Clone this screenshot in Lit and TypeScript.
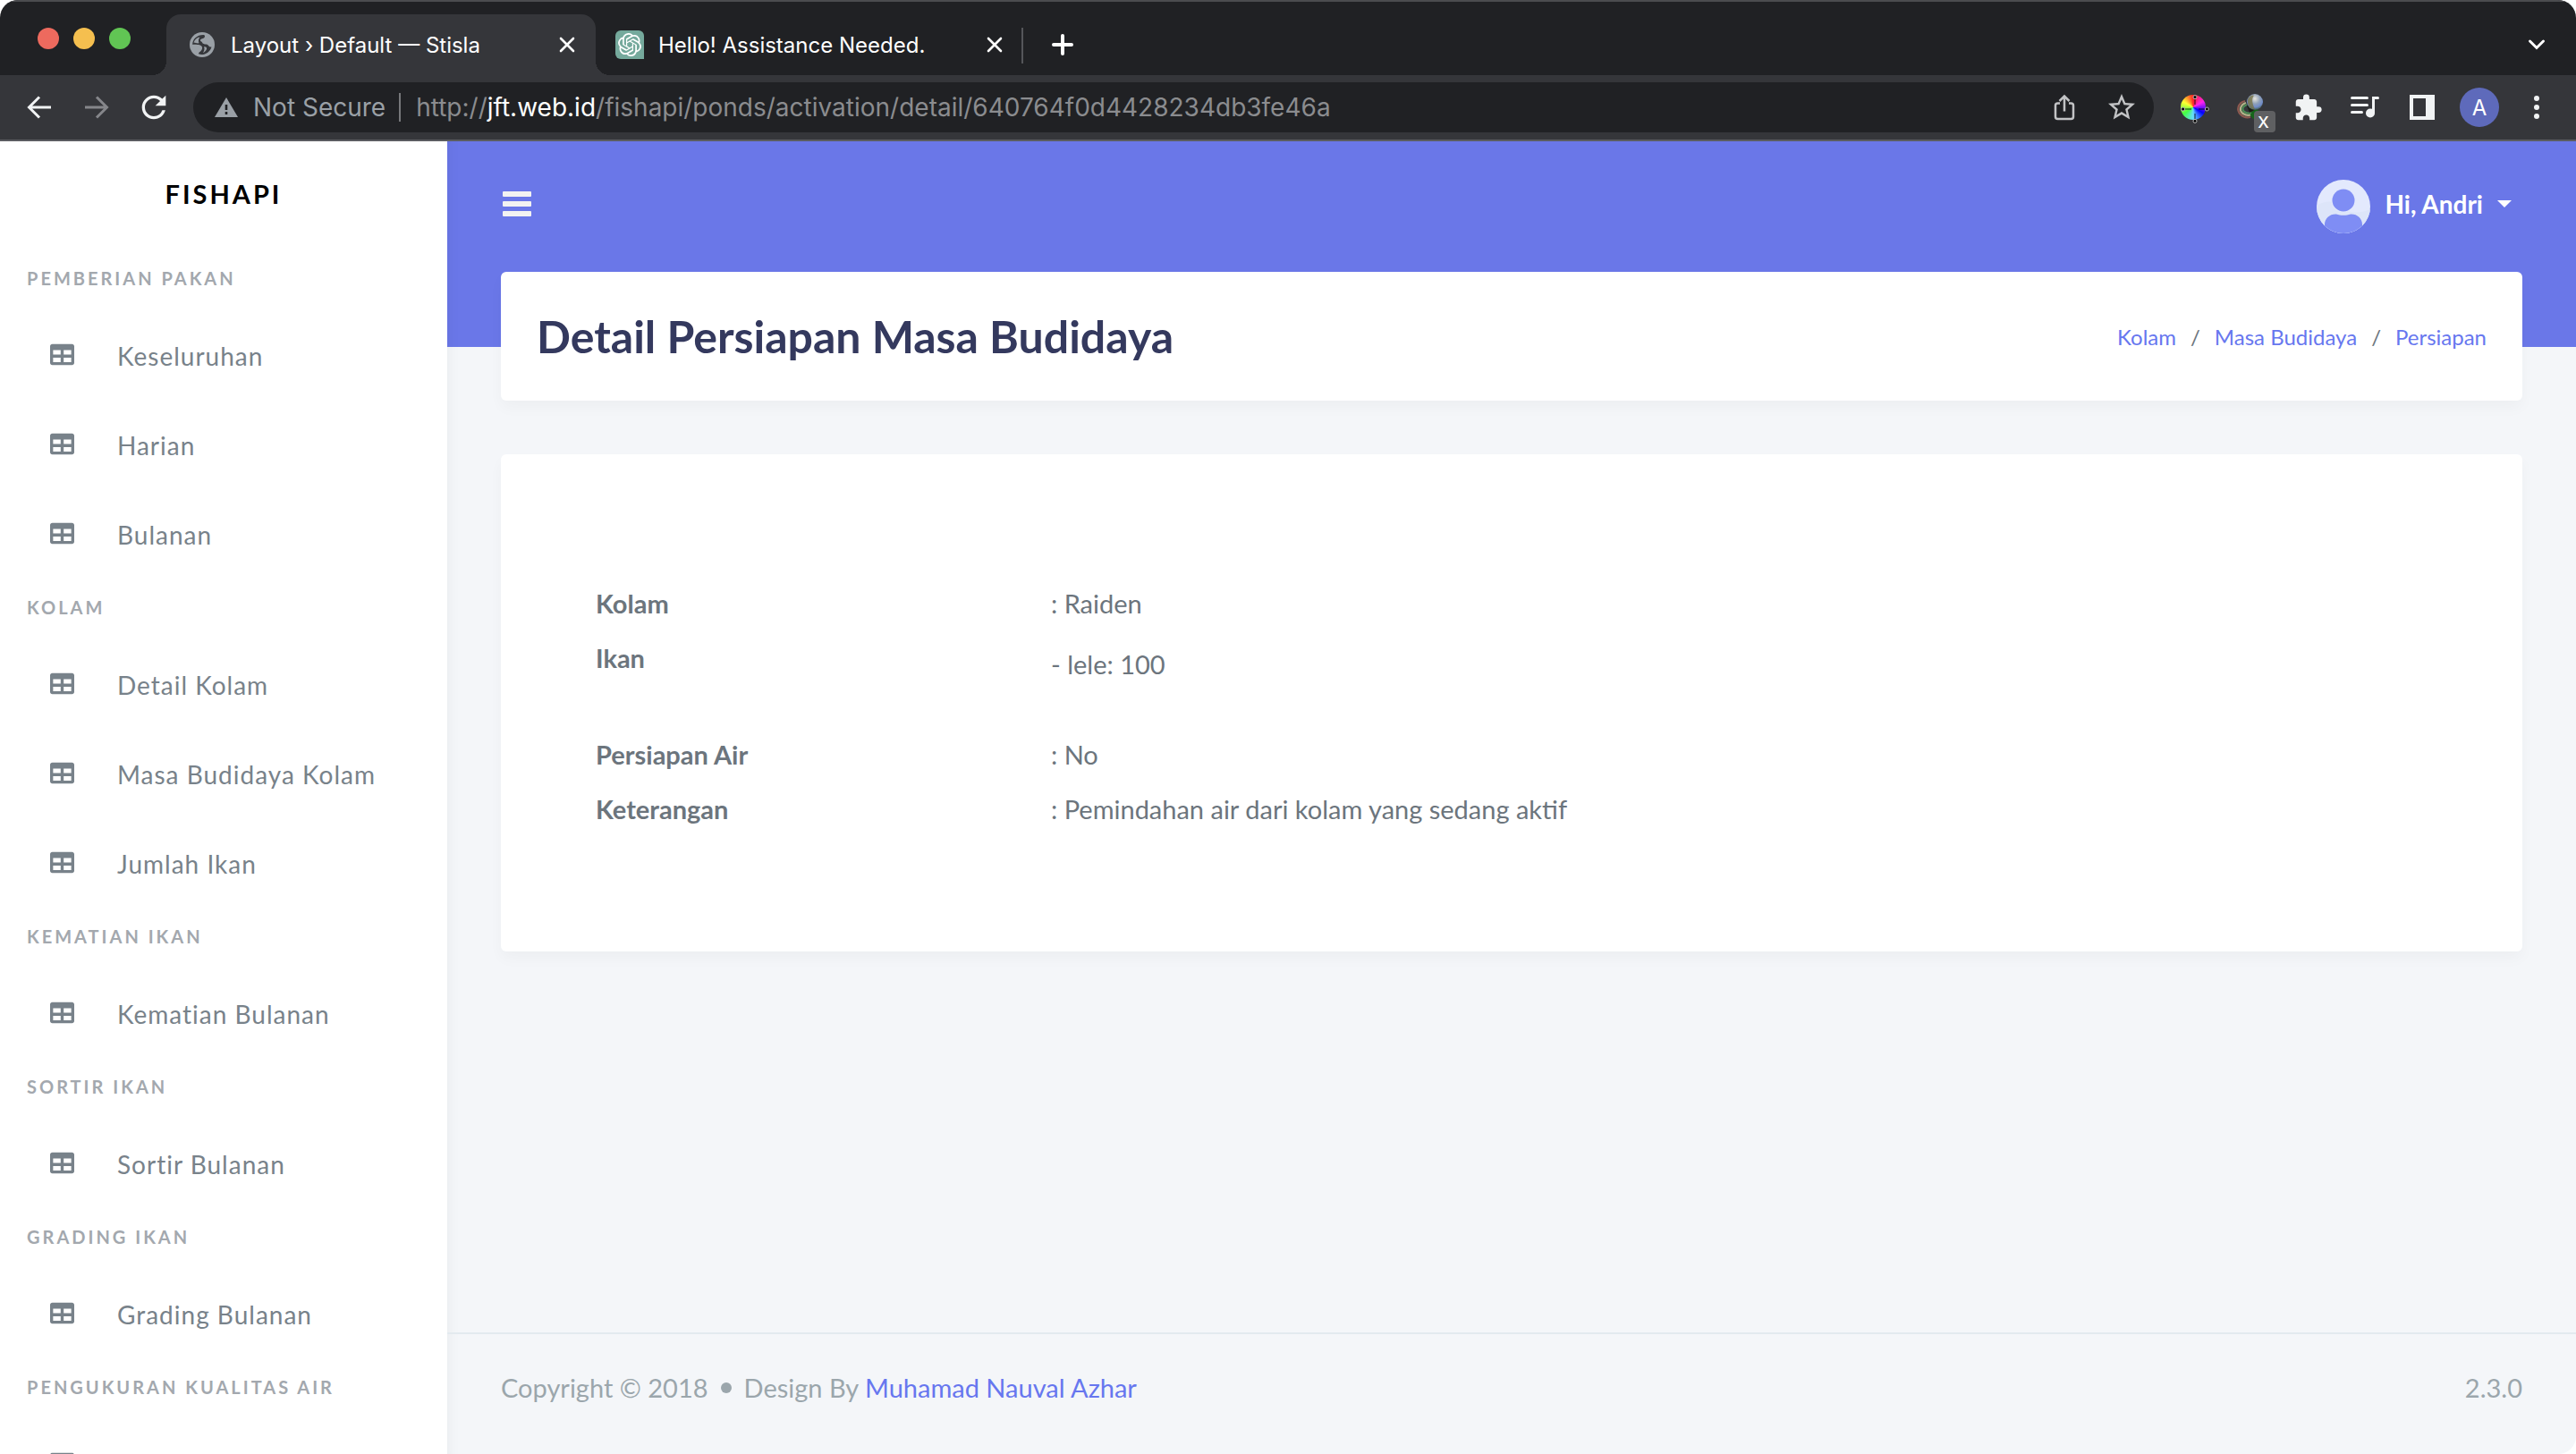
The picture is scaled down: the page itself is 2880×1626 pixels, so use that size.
import { LitElement, html, css, svg } from "lit";
import { customElement } from "lit/decorators.js";

const tableIcon = html`<svg class="table-icon" viewBox="0 0 512 512" aria-hidden="true">
  <path d="M464 32H48C21.49 32 0 53.49 0 80v352c0 26.51 21.49 48 48 48h416c26.51 0 48-21.49 48-48V80c0-26.51-21.49-48-48-48zM224 416H64v-96h160v96zm0-160H64v-96h160v96zm224 160H288v-96h160v96zm0-160H288v-96h160v96z" />
</svg>`;

const closeIcon = svg`<svg width="18" height="18" viewBox="0 0 18 18" fill="none" stroke="#fff" stroke-width="2.600" stroke-linecap="round"><path d="M2 2l14 14M16 2L2 16"/></svg>`;

@customElement("browser-tabs")
export class BrowserTabs extends LitElement {
  static styles = css`
    :host {
      display: flex;
      align-items: flex-end;
      box-sizing: border-box;
      height: 84px;
      padding: 0 12px 0 42px;
      background: #202124;
      border-top: 2px solid #4b4c4f;
      font-family: Inter, "Liberation Sans", sans-serif;
      font-size: 24px;
      color: #fff;
    }
    button {
      display: grid;
      place-items: center;
      padding: 0;
      border: 0;
      background: none;
      color: inherit;
    }
    .lights {
      display: flex;
      gap: 16px;
      margin-bottom: 29px;
      margin-right: 40px;
    }
    .light {
      width: 24px;
      height: 24px;
      border-radius: 50%;
    }
    .red { background: #ed6a5e; }
    .amber { background: #f5bf4f; }
    .green { background: #61c554; }
    .tab {
      position: relative;
      display: flex;
      align-items: center;
      box-sizing: border-box;
      width: 480px;
      height: 68px;
      padding: 0 23px 0 26px;
      gap: 18px;
    }
    .tab .title {
      flex: 1;
      white-space: nowrap;
    }
    .active {
      background: #35363a;
      border-radius: 16px 16px 0 0;
    }
    .active::before,
    .active::after {
      content: "";
      position: absolute;
      bottom: 0;
      width: 16px;
      height: 16px;
    }
    .active::before {
      left: -16px;
      background: radial-gradient(circle at 0 0, transparent 16px, #35363a 16px);
    }
    .active::after {
      right: -16px;
      background: radial-gradient(circle at 100% 0, transparent 16px, #35363a 16px);
    }
    .idle {
      width: 476px;
      gap: 16px;
      padding: 0 21px 0 22px;
    }
    .favicon {
      display: grid;
      place-items: center;
      width: 32px;
      height: 32px;
      border-radius: 6px 6px 0 6px;
      background: #75a99c;
    }
    .divider {
      width: 2px;
      height: 40px;
      margin-bottom: 13px;
      background: #55565a;
    }
    .plus {
      width: 88px;
      height: 68px;
    }
    .search {
      width: 64px;
      height: 68px;
      margin-left: auto;
    }
  `;

  render() {
    return html`
      <div class="lights">
        <button class="light red" aria-label="Close window"></button>
        <button class="light amber" aria-label="Minimise window"></button>
        <button class="light green" aria-label="Zoom window"></button>
      </div>
      <div class="tab active">
        <svg width="28" height="28" viewBox="0 0 28 28" aria-hidden="true">
          <circle cx="14" cy="14" r="14" fill="#9aa0a6" />
          <path fill="#35363a" d="M15.500 3C17 3.200 17.500 4.500 16.500 6C15.500 7.500 12.500 7 12 8.500C11.500 10.500 13.500 10 14 11.500C14.500 13 16.500 13.500 18.500 13.500C21.500 13.500 20.500 16.800 24.500 16.500C23 21 19.500 24.500 14.500 25C12.500 25 11 24.800 10 24.300C9.800 22.500 12 22 13 20.500C14.500 18.500 14.500 16.500 13 15.200C11 13.600 7 14.500 3.200 13.800C3.200 8 8 3 15.500 3z" />
          <path fill="#9aa0a6" d="M4.500 11.500C6 7.500 8.500 6 11.500 5.500C9.800 7.500 9.500 10 10.500 12.300C8.500 12.600 6.500 12 4.500 11.500zM16 16.500C18 16 19.500 17 19 19C18 21 16.500 22.500 15 23C16.500 20.500 17 18.500 16 16.500z" />
        </svg>
        <span class="title">Layout › Default — Stisla</span>
        <button aria-label="Close tab">${closeIcon}</button>
      </div>
      <div class="tab idle">
        <span class="favicon">
          <svg width="26" height="26" viewBox="0 0 24 24" fill="#fff" aria-hidden="true">
            <path d="M22.2819 9.8211a5.9847 5.9847 0 0 0-.5157-4.9108 6.0462 6.0462 0 0 0-6.5098-2.9A6.0651 6.0651 0 0 0 4.9807 4.1818a5.9847 5.9847 0 0 0-3.9977 2.9 6.0462 6.0462 0 0 0 .7427 7.0966 5.98 5.98 0 0 0 .511 4.9107 6.051 6.051 0 0 0 6.5146 2.9001A5.9847 5.9847 0 0 0 13.2599 24a6.0557 6.0557 0 0 0 5.7718-4.2058 5.9894 5.9894 0 0 0 3.9977-2.9001 6.0557 6.0557 0 0 0-.7475-7.0729zm-9.022 12.6081a4.4755 4.4755 0 0 1-2.8764-1.0408l.1419-.0804 4.7783-2.7582a.7948.7948 0 0 0 .3927-.6813v-6.7369l2.02 1.1686a.071.071 0 0 1 .038.052v5.5826a4.504 4.504 0 0 1-4.4945 4.4944zm-9.6607-4.1254a4.4708 4.4708 0 0 1-.5346-3.0137l.142.0852 4.783 2.7582a.7712.7712 0 0 0 .7806 0l5.8428-3.3685v2.3324a.0804.0804 0 0 1-.0332.0615L9.74 19.9502a4.4992 4.4992 0 0 1-6.1408-1.6464zM2.3408 7.8956a4.485 4.485 0 0 1 2.3655-1.9728V11.6a.7664.7664 0 0 0 .3879.6765l5.8144 3.3543-2.0201 1.1685a.0757.0757 0 0 1-.071 0l-4.8303-2.7865A4.504 4.504 0 0 1 2.3408 7.872zm16.5963 3.8558L13.1038 8.364 15.1192 7.2a.0757.0757 0 0 1 .071 0l4.8303 2.7913a4.4944 4.4944 0 0 1-.6765 8.1042v-5.6772a.79.79 0 0 0-.407-.667zm2.0107-3.0231l-.142-.0852-4.7735-2.7818a.7759.7759 0 0 0-.7854 0L9.409 9.2297V6.8974a.0662.0662 0 0 1 .0284-.0615l4.8303-2.7866a4.4992 4.4992 0 0 1 6.6802 4.66zM8.3065 12.863l-2.02-1.1638a.0804.0804 0 0 1-.038-.0567V6.0742a4.4992 4.4992 0 0 1 7.3757-3.4537l-.142.0805L8.704 5.459a.7948.7948 0 0 0-.3927.6813zm1.0976-2.3654l2.602-1.4998 2.6069 1.4998v2.9994l-2.5974 1.4997-2.6067-1.4997Z" />
          </svg>
        </span>
        <span class="title">Hello! Assistance Needed.</span>
        <button aria-label="Close tab">${closeIcon}</button>
      </div>
      <span class="divider"></span>
      <button class="plus" aria-label="New tab">
        <svg width="24" height="24" viewBox="0 0 24 24" fill="none" stroke="#fff" stroke-width="4" stroke-linecap="round"><path d="M12 2v20M2 12h20" /></svg>
      </button>
      <button class="search" aria-label="Search tabs">
        <svg width="20" height="14" viewBox="0 0 20 14" fill="none" stroke="#fff" stroke-width="3" stroke-linecap="round"><path d="M2.500 3L10 10.500 17.500 3" /></svg>
      </button>
    `;
  }
}

@customElement("browser-toolbar")
export class BrowserToolbar extends LitElement {
  static styles = css`
    :host {
      display: flex;
      align-items: center;
      box-sizing: border-box;
      height: 74px;
      padding: 0 12px;
      background: #35363a;
      border-bottom: 2px solid #5b5c60;
      font-family: Inter, "Liberation Sans", sans-serif;
      font-size: 28px;
    }
    button {
      display: grid;
      place-items: center;
      width: 64px;
      height: 56px;
      padding: 0;
      border: 0;
      background: none;
      font: inherit;
    }
    .omnibox {
      display: flex;
      align-items: center;
      flex: 1;
      min-width: 0;
      height: 56px;
      margin: 0 12px;
      padding: 0 4px 0 24px;
      box-sizing: border-box;
      border-radius: 28px;
      background: #202124;
      white-space: nowrap;
    }
    .security {
      display: flex;
      align-items: center;
      gap: 17px;
      width: auto;
      color: #9aa0a6;
    }
    .bar {
      width: 2px;
      height: 32px;
      margin: 0 17px 0 15px;
      background: #77787b;
    }
    .url {
      flex: 1;
      overflow: hidden;
      color: #8b8c8f;
      line-height: 40px;
      outline: 0;
    }
    .host {
      color: #fff;
    }
    .wheel {
      display: grid;
      place-items: center;
      width: 28px;
      height: 28px;
      border-radius: 50%;
      background: conic-gradient(#f22, #f2e 60deg, #00f 120deg, #6df 180deg, #4f4 235deg, #ff3 300deg, #f22);
    }
    .ext {
      position: relative;
    }
    .badge {
      position: absolute;
      left: 36px;
      top: 32px;
      box-sizing: border-box;
      width: 24px;
      height: 24px;
      padding-right: 3px;
      border-radius: 4px;
      background: #5f6062;
      color: #fff;
      font-family: "Liberation Sans", sans-serif;
      font-size: 24px;
      line-height: 22px;
      text-align: center;
    }
    .avatar {
      display: grid;
      place-items: center;
      width: 44px;
      height: 44px;
      border-radius: 50%;
      background: #5e6abb;
      color: #fff;
      font-size: 24px;
    }
  `;

  render() {
    return html`
      <button aria-label="Back">
        <svg width="28" height="28" viewBox="0 0 28 28" fill="none" stroke="#f1f3f4" stroke-width="3"><path d="M27 14H3M14 2.500L2.500 14 14 25.500" /></svg>
      </button>
      <button aria-label="Forward">
        <svg width="28" height="28" viewBox="0 0 28 28" fill="none" stroke="#85868a" stroke-width="3"><path d="M1 14h24M14 2.500L25.500 14 14 25.500" /></svg>
      </button>
      <button aria-label="Reload">
        <svg width="40" height="40" viewBox="0 0 24 24" fill="#f1f3f4"><path d="M17.65 6.35A7.958 7.958 0 0 0 12 4c-4.42 0-7.99 3.58-7.99 8s3.57 8 7.99 8c3.73 0 6.84-2.55 7.73-6h-2.08A5.99 5.99 0 0 1 12 18c-3.31 0-6-2.69-6-6s2.69-6 6-6c1.66 0 3.14.69 4.22 1.78L13 11h7V4z" /></svg>
      </button>
      <div class="omnibox">
        <button class="security">
          <svg width="26" height="22" viewBox="0 0 26 22" aria-hidden="true"><path fill="#9aa0a6" d="M13 0l13 22H0z" /><path fill="#202124" d="M11.700 8h2.600v6h-2.600zM11.700 16h2.600v3h-2.600z" /></svg>
          Not Secure
        </button>
        <span class="bar"></span>
        <div class="url" role="textbox" contenteditable="true" spellcheck="false" aria-label="Address">http://<span class="host">jft.web.id</span>/fishapi/ponds/activation/detail/640764f0d4428234db3fe46a</div>
        <button aria-label="Share">
          <svg width="24" height="30" viewBox="0 0 24 30" fill="none" stroke="#c2c3c5" stroke-width="2.500"><path d="M7 10.500H4.500a2.500 2.500 0 0 0-2.500 2.500v12.500a2.500 2.500 0 0 0 2.500 2.500h15a2.500 2.500 0 0 0 2.500-2.500V13a2.500 2.500 0 0 0-2.500-2.500H17M12 19.500V3M6.500 8L12 2.500 17.500 8" /></svg>
        </button>
        <button aria-label="Bookmark">
          <svg width="36" height="36" viewBox="0 0 24 24" fill="#c2c3c5"><path d="M22 9.24l-7.19-.62L12 2 9.19 8.63 2 9.24l5.46 4.73L5.82 21 12 17.27 18.18 21l-1.63-7.03L22 9.24zM12 15.4l-3.76 2.27 1-4.28-3.32-2.88 4.38-.38L12 6.1l1.71 4.04 4.38.38-3.32 2.88 1 4.28L12 15.4z" /></svg>
        </button>
      </div>
      <button aria-label="Colour picker">
        <span class="wheel">
          <svg width="32" height="32" viewBox="0 0 32 32" aria-hidden="true">
            <path d="M16 4v7M16 21v7M4 16h8M20 16h8" stroke="#000" stroke-opacity=".55" stroke-width="1.500" />
            <g fill="#000" stroke="#bbb" stroke-width="1"><circle cx="16" cy="2.600" r="2" /><circle cx="16" cy="29.400" r="2" /><circle cx="2.600" cy="16" r="2" /><circle cx="29.400" cy="16" r="2" /></g>
          </svg>
        </span>
      </button>
      <button class="ext" aria-label="Extension">
        <svg width="34" height="32" viewBox="0 0 34 32" aria-hidden="true">
          <defs>
            <radialGradient id="ball" cx=".5" cy=".3" r=".7"><stop offset="0" stop-color="#e8e6dc" /><stop offset=".45" stop-color="#8fa0b8" /><stop offset=".75" stop-color="#6f8bc9" /><stop offset="1" stop-color="#3f5a49" /></radialGradient>
          </defs>
          <path d="M15 23l8-5 4 2v8l-7 1z" fill="#15651a" />
          <g fill="none" stroke-width="2.200"><path d="M11 9C3 11 1 19 6 24c3 3 7 4 11 3" stroke="#8d5a50" /><path d="M12 11C6 13 4 19 8 22.500c3 2 6 3 9 2" stroke="#b5b48a" /><path d="M13 13c-5 2-6 5-3 8 2 1.500 5 2 8 1" stroke="#4c8a55" /></g>
          <path d="M13 14l8-1 2 5-7 4z" fill="#1c1d14" />
          <circle cx="22" cy="10" r="9" fill="url(#ball)" />
          <path d="M14 7c3-5 6-5 7-4-3 3-2 9 1 15-6 0-9-5-8-11z" fill="#77713f" fill-opacity=".75" />
        </svg>
        <span class="badge">x</span>
      </button>
      <button aria-label="Extensions">
        <svg width="33" height="33" viewBox="0 0 24 24" fill="#f1f3f4"><path d="M20.5 11H19V7c0-1.1-.9-2-2-2h-4V3.5a2.500 2.500 0 0 0-5 0V5H4c-1.1 0-1.99.9-1.99 2v3.8H3.5c1.49 0 2.7 1.21 2.7 2.7s-1.21 2.7-2.7 2.7H2V20c0 1.1.9 2 2 2h3.8v-1.5c0-1.49 1.21-2.7 2.7-2.7 1.49 0 2.7 1.21 2.7 2.7V22H17c1.1 0 2-.9 2-2v-4h1.5a2.500 2.500 0 0 0 0-5z" /></svg>
      </button>
      <button aria-label="Media controls">
        <svg width="32" height="26" viewBox="0 0 32 26" fill="none" stroke="#f1f3f4" stroke-width="3" stroke-linecap="round"><path d="M1.500 2.500h17M1.500 10.500h17M1.500 18.500h11M25.500 19V2.500h5" /><circle cx="22" cy="19.500" r="5" fill="#f1f3f4" stroke="none" /></svg>
      </button>
      <button aria-label="Side panel">
        <svg width="28" height="28" viewBox="0 0 28 28" fill="#f1f3f4"><path fill-rule="evenodd" d="M0 0h28v28H0zM4 4v20h14V4z" /></svg>
      </button>
      <button aria-label="Profile"><span class="avatar">A</span></button>
      <button aria-label="Menu">
        <svg width="6" height="26" viewBox="0 0 6 26" fill="#f1f3f4"><circle cx="3" cy="3" r="3" /><circle cx="3" cy="13" r="3" /><circle cx="3" cy="23" r="3" /></svg>
      </button>
    `;
  }
}

const menu: { title: string; items: string[] }[] = [
  { title: "PEMBERIAN PAKAN", items: ["Keseluruhan", "Harian", "Bulanan"] },
  { title: "KOLAM", items: ["Detail Kolam", "Masa Budidaya Kolam", "Jumlah Ikan"] },
  { title: "KEMATIAN IKAN", items: ["Kematian Bulanan"] },
  { title: "SORTIR IKAN", items: ["Sortir Bulanan"] },
  { title: "GRADING IKAN", items: ["Grading Bulanan"] },
  { title: "PENGUKURAN KUALITAS AIR", items: [""] },
];

@customElement("side-menu")
export class SideMenu extends LitElement {
  static styles = css`
    :host {
      display: block;
      width: 500px;
      flex: none;
      overflow: hidden;
      background: #fff;
    }
    .brand {
      display: block;
      line-height: 118px;
      text-align: center;
      font-size: 29px;
      font-weight: 700;
      letter-spacing: 3px;
      color: #000;
      text-decoration: none;
    }
    nav {
      padding-top: 4px;
    }
    h2 {
      margin: 0;
      height: 68px;
      padding-left: 30px;
      font-size: 20px;
      line-height: 62px;
      font-weight: 700;
      letter-spacing: 3px;
      color: #a3a8ae;
    }
    ul {
      margin: 0;
      padding: 0;
      list-style: none;
    }
    .item {
      display: flex;
      align-items: center;
      gap: 48px;
      height: 100px;
      padding-left: 56px;
      font-size: 28px;
      letter-spacing: 1px;
      color: #78828a;
      text-decoration: none;
    }
    .table-icon {
      width: 27px;
      height: 27px;
      margin-bottom: 4px;
      fill: #78828a;
    }
  `;

  render() {
    return html`
      <a class="brand" href="#">FISHAPI</a>
      <nav>
        ${menu.map(
          (group) => html`
            <h2>${group.title}</h2>
            <ul>
              ${group.items.map(
                (label) => html`<li><a class="item" href="#" aria-label=${label || "Kualitas Air"}>${tableIcon}<span>${label}</span></a></li>`,
              )}
            </ul>
          `,
        )}
      </nav>
    `;
  }
}

const details: { label: string; value: string; list?: boolean }[] = [
  { label: "Kolam", value: ": Raiden" },
  { label: "Ikan", value: "- lele: 100", list: true },
  { label: "Persiapan Air", value: ": No" },
  { label: "Keterangan", value: ": Pemindahan air dari kolam yang sedang aktif" },
];

@customElement("app-root")
export class AppRoot extends LitElement {
  static styles = css`
    :host {
      display: flex;
      flex-direction: column;
      height: 100vh;
      overflow: hidden;
      border-radius: 20px;
      background: #fff;
      font-family: Lato, "Noto Sans", sans-serif;
      font-size: 29px;
      color: #6c757d;
    }
    a {
      color: #6777ef;
      text-decoration: none;
    }
    .page {
      display: flex;
      flex: 1;
      min-height: 0;
    }
    .content {
      display: flex;
      flex-direction: column;
      flex: 1;
      min-width: 0;
      background: linear-gradient(#6a77e8 230px, #f4f6f9 230px);
      box-shadow: inset 16px 0 16px -16px rgba(0, 0, 0, 0.06);
    }
    .navbar {
      display: flex;
      align-items: center;
      justify-content: space-between;
      height: 140px;
      margin-bottom: 6px;
      padding: 0 72px 0 62px;
    }
    .navbar button {
      display: flex;
      align-items: center;
      padding: 0;
      border: 0;
      background: none;
      font: inherit;
      font-size: 28px;
      font-weight: 700;
      color: #fff;
    }
    .user {
      gap: 16px;
    }
    .user svg:first-child {
      margin-top: 6px;
    }
    .card {
      margin: 0 60px 60px;
      border-radius: 6px;
      background: #fff;
      box-shadow: 0 8px 16px rgba(0, 0, 0, 0.03);
    }
    .heading {
      display: flex;
      align-items: center;
      justify-content: space-between;
      padding: 42px 40px;
    }
    h1 {
      margin: 0;
      font-size: 50px;
      line-height: 60px;
      color: #34395e;
    }
    .crumbs {
      display: flex;
      gap: 16px;
      font-size: 24px;
    }
    dl {
      display: grid;
      grid-template-columns: 1fr 3fr;
      row-gap: 24px;
      padding: 148px 118px 141px 106px;
      line-height: 37px;
    }
    dt {
      font-weight: 700;
    }
    dd {
      margin: 0;
    }
    .list {
      padding: 7px 0 40px;
    }
    footer {
      display: flex;
      justify-content: space-between;
      margin-top: auto;
      padding: 42px 60px 56px;
      border-top: 2px solid #e3eaef;
      line-height: 36px;
      color: #9ba6ac;
    }
    .credit {
      display: flex;
      align-items: center;
      gap: 14px;
    }
    .dot {
      width: 12px;
      height: 12px;
      border-radius: 50%;
      background: #9ba6ac;
    }
  `;

  render() {
    return html`
      <browser-tabs></browser-tabs>
      <browser-toolbar></browser-toolbar>
      <div class="page">
        <side-menu></side-menu>
        <div class="content">
          <header class="navbar">
            <button aria-label="Toggle menu">
              <svg width="32" height="30" viewBox="0 0 32 30" fill="#f2f2f2"><rect width="32" height="6" y="1" rx="1" /><rect width="32" height="6" y="12" rx="1" /><rect width="32" height="6" y="23" rx="1" /></svg>
            </button>
            <button class="user">
              <svg width="60" height="60" viewBox="0 0 60 60" aria-hidden="true">
                <clipPath id="disc"><circle cx="30" cy="30" r="30" /></clipPath>
                <g clip-path="url(#disc)">
                  <rect width="60" height="60" fill="#e3e9fd" />
                  <path d="M0 29c8-5 14-5 20-4 12 14 28 13 40 8v27H0z" fill="#dde5f9" />
                  <circle cx="30" cy="23" r="13.500" fill="#e3e9fd" />
                  <circle cx="30" cy="23" r="12.500" fill="#7f8df4" />
                  <path d="M9 62V50c0-7 6-12 13-11.500 5 1.800 11 1.800 16 0 7-.5 13 4.500 13 11.500v12z" fill="#7f8df4" />
                </g>
              </svg>
              <span>Hi, Andri</span>
              <svg width="16" height="8" viewBox="0 0 16 8" fill="#fff" aria-hidden="true"><path d="M0 0h16L8 8z" /></svg>
            </button>
          </header>
          <main>
            <section class="card heading">
              <h1>Detail Persiapan Masa Budidaya</h1>
              <nav class="crumbs" aria-label="Breadcrumb">
                <a href="#">Kolam</a><span>/</span><a href="#">Masa Budidaya</a><span>/</span><a href="#">Persiapan</a>
              </nav>
            </section>
            <dl class="card">
              ${details.map((d) => html`<dt>${d.label}</dt><dd class=${d.list ? "list" : ""}>${d.value}</dd>`)}
            </dl>
          </main>
          <footer>
            <div class="credit">
              <span>Copyright © 2018</span><span class="dot"></span><span>Design By <a href="#">Muhamad Nauval Azhar</a></span>
            </div>
            <span>2.3.0</span>
          </footer>
        </div>
      </div>
    `;
  }
}
